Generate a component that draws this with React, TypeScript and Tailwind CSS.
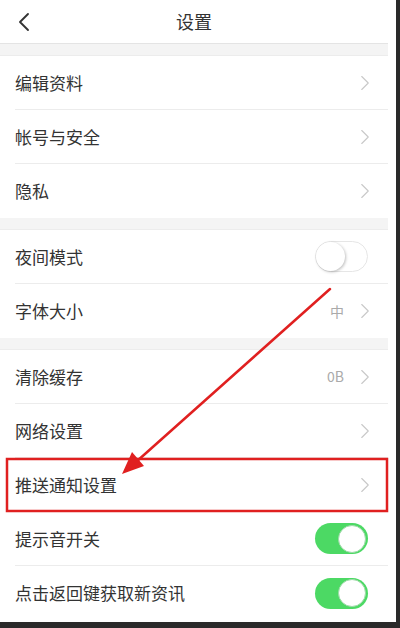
import { ChevronLeft, ChevronRight } from 'lucide-react'

type Row = { label: string; value?: string; toggle?: 'on' | 'off'; chevron?: boolean; last?: boolean }

const groups: Row[][] = [
  [
    { label: '编辑资料', chevron: true },
    { label: '帐号与安全', chevron: true },
    { label: '隐私', chevron: true, last: true },
  ],
  [
    { label: '夜间模式', toggle: 'off' },
    { label: '字体大小', value: '中', chevron: true, last: true },
  ],
  [
    { label: '清除缓存', value: '0B', chevron: true },
    { label: '网络设置', chevron: true },
    { label: '推送通知设置', chevron: true },
    { label: '提示音开关', toggle: 'on' },
    { label: '点击返回键获取新资讯', toggle: 'on', last: true },
  ],
]

function Toggle({ on }: { on: boolean }) {
  if (on) {
    return (
      <div className="flex h-[31px] w-[53px] items-center justify-end rounded-full bg-[#4cd964] pr-[2px]">
        <div className="h-[28px] w-[28px] rounded-full border border-[#9ed9a8] bg-white" />
      </div>
    )
  }
  return (
    <div className="flex h-[31px] w-[53px] items-center rounded-full border border-[#e6e6e6] bg-white">
      <div className="h-[29px] w-[29px] rounded-full bg-white shadow-[1px_1px_3px_rgba(0,0,0,0.25)]" />
    </div>
  )
}

function SettingRow({ row }: { row: Row }) {
  return (
    <div className="pl-[15px]">
      <div className={`flex h-[54px] items-center pr-[10px] ${row.last ? '' : 'border-b border-[#ececec]'}`}>
        <span className="flex-1 text-[17px] text-[#333]">{row.label}</span>
        {row.value && <span className="mr-[8px] text-[14px] text-[#aaa]">{row.value}</span>}
        {row.chevron && <ChevronRight size={26} strokeWidth={1} className="text-[#c8c8c8]" />}
        {row.toggle && <div className="mr-[10px]"><Toggle on={row.toggle === 'on'} /></div>}
      </div>
    </div>
  )
}

export default function App() {
  return (
    <div className="h-[628px] w-[400px] bg-[#2a2a2a]" style={{ fontFamily: '"Noto Sans CJK SC", "Noto Sans", sans-serif' }}>
      <div className="relative h-[622px] w-[396px] overflow-hidden bg-white">
        <div className="w-[388px]">
          <div className="flex h-[44px] items-center border-b border-[#e4e4e4] px-[8px]">
            <ChevronLeft size={32} strokeWidth={1.4} className="text-[#333]" />
            <div className="flex-1 pr-[32px] text-center text-[18px] text-[#333]">设置</div>
          </div>
          {groups.map((g, i) => (
            <div key={i}>
              <div className="h-[12px] border-b border-[#ececec] bg-[#f4f4f4]" />
              {g.map((r) => (
                <SettingRow key={r.label} row={r} />
              ))}
            </div>
          ))}
        </div>
        <svg className="pointer-events-none absolute left-0 top-0" width="396" height="622">
          <rect x="7" y="459" width="380" height="52" fill="none" stroke="#e02020" strokeWidth="2.5" />
          <line x1="330" y1="289" x2="136" y2="462" stroke="#e02020" strokeWidth="2.5" strokeLinecap="round" />
          <polygon points="122,474 132,452 144,466" fill="#e02020" />
        </svg>
      </div>
    </div>
  )
}
